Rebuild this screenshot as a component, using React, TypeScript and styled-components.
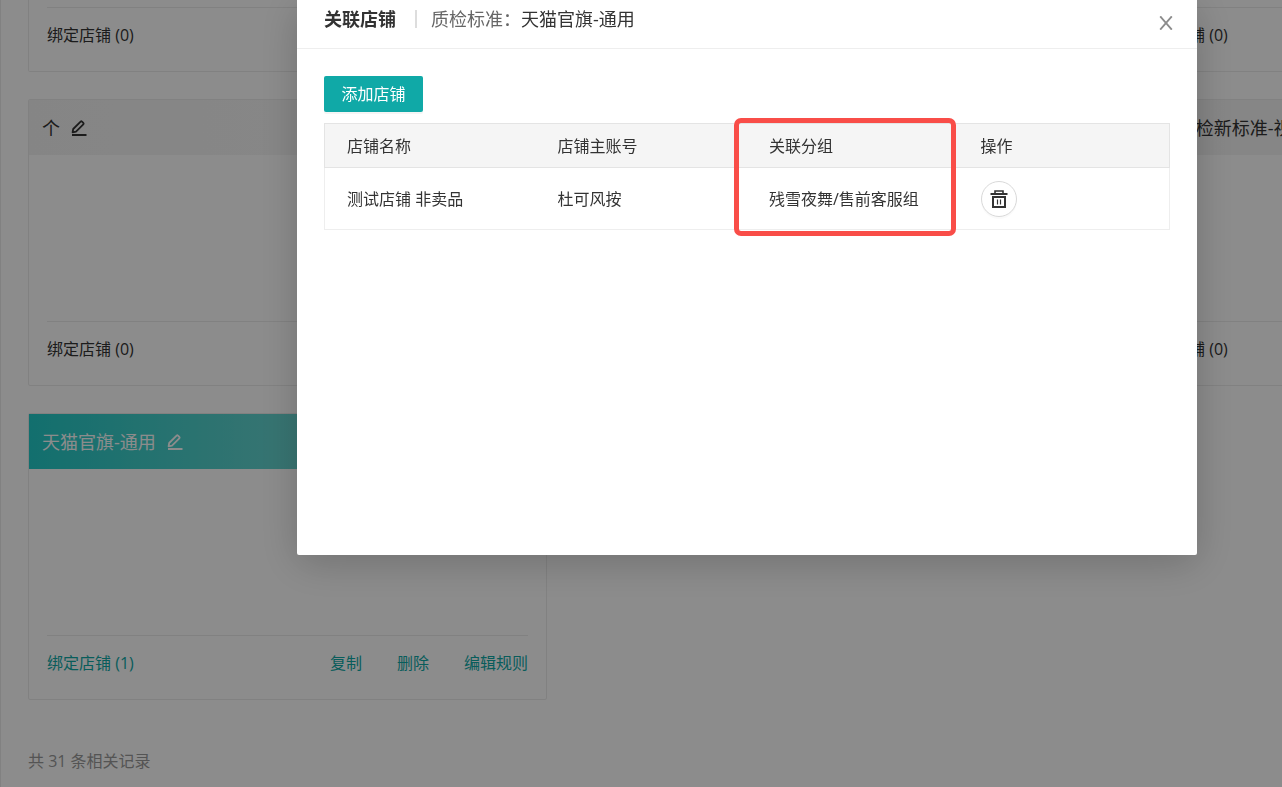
import React from 'react';
import styled, { createGlobalStyle } from 'styled-components';

const GlobalStyle = createGlobalStyle`
  *, *::before, *::after { box-sizing: border-box; }
  html, body { margin: 0; background: #fff; }
  body, button {
    font-family: 'Open Sans', 'Noto Sans CJK SC', sans-serif;
    font-size: 16px;
    line-height: 24px;
    color: #333;
  }
`;

const Page = styled.main`
  height: 100vh;
  overflow: hidden;
  padding-left: 27px;
  border-left: 1px solid #ececec;
`;

const CardGrid = styled.section`
  display: grid;
  grid-template-columns: repeat(3, minmax(519px, 40%));
  column-gap: 28px;
  row-gap: 27px;
`;

const CardBox = styled.article<{ $clipped?: boolean; $column: number }>`
  grid-column: ${(p) => p.$column};
  border: 1px solid #ececec;
  border-top-width: ${(p) => (p.$clipped ? '0' : '1px')};
  border-radius: ${(p) => (p.$clipped ? '0 0 2px 2px' : '2px')};
`;

const CardHead = styled.header<{ $active?: boolean }>`
  display: flex;
  align-items: center;
  gap: 11px;
  height: 55px;
  padding-left: 13px;
  font-size: 18px;
  white-space: nowrap;
  color: ${(p) => (p.$active ? '#fff' : '#333')};
  background: ${(p) =>
    p.$active
      ? 'linear-gradient(90deg, #22cbc8, #abded7)'
      : 'linear-gradient(90deg, #f3f3f3, #f9f9f9)'};
`;

const IconButton = styled.button`
  display: flex;
  padding: 0;
  border: 0;
  background: none;
  color: inherit;
  cursor: pointer;
`;

const CardBody = styled.div<{ $clipped?: boolean }>`
  height: ${(p) => (p.$clipped ? '7px' : '166px')};
`;

const CardFoot = styled.footer<{ $active?: boolean }>`
  display: flex;
  justify-content: space-between;
  margin: 0 18px;
  padding: 15px 0 24px;
  border-top: 1px solid #ececec;
  color: ${(p) => (p.$active ? '#0fa9a7' : '#333')};
`;

const Actions = styled.nav`
  display: flex;
  gap: 35px;
`;

const TextLink = styled.a`
  color: inherit;
  text-decoration: none;
`;

const Total = styled.p`
  margin: 49px 0 0;
  color: #999;
`;

const Mask = styled.div`
  position: fixed;
  inset: 0;
  padding: 0 85px 0 297px;
  background: rgba(0, 0, 0, 0.45);
`;

const Modal = styled.div`
  min-height: 555px;
  border-radius: 0 0 2px 2px;
  background: #fff;
  box-shadow: 0 8px 40px rgba(0, 0, 0, 0.2);
`;

const ModalHead = styled.header`
  display: flex;
  justify-content: space-between;
  height: 49px;
  padding: 0 24px 0 27px;
  border-bottom: 1px solid #eee;
`;

const Heading = styled.div`
  display: flex;
  align-items: center;
  height: 38px;
  font-size: 18px;
`;

const Title = styled.h2`
  margin: 0;
  font-size: 18px;
  font-weight: 700;
`;

const Divider = styled.span`
  width: 2px;
  height: 18px;
  margin: 0 14px 0 19px;
  background: #ddd;
`;

const Label = styled.span`
  color: #666;
`;

const CloseButton = styled(IconButton)`
  align-items: center;
  height: 46px;
  color: #8c8c8c;
`;

const ModalBody = styled.div`
  padding: 27px;
`;

const PrimaryButton = styled.button`
  display: block;
  min-width: 99px;
  height: 36px;
  margin-bottom: 11px;
  padding: 0 17px;
  border: 0;
  border-radius: 2px;
  background: #10a9a7;
  color: #fff;
  box-shadow: 0 2px 0 rgba(0, 0, 0, 0.04);
  cursor: pointer;
`;

const TableWrap = styled.div`
  position: relative;
`;

const Table = styled.table`
  width: 100%;
  table-layout: fixed;
  border-spacing: 0;
  text-align: left;
`;

const Th = styled.th`
  height: 45px;
  padding: 0 0 0 22px;
  border: solid #e4e4e4;
  border-width: 1px 0;
  background: #f5f5f5;
  font-weight: 400;
  &:first-child { border-left-width: 1px; }
  &:last-child { border-right-width: 1px; }
`;

const Td = styled.td`
  height: 62px;
  padding: 0 0 0 22px;
  border: solid #eee;
  border-width: 0 0 1px;
  &:first-child { border-left-width: 1px; }
  &:last-child { border-right-width: 1px; }
`;

const RoundButton = styled(IconButton)`
  align-items: center;
  justify-content: center;
  width: 36px;
  height: 36px;
  border: 1px solid #d9d9d9;
  border-radius: 50%;
  background: #fff;
  box-shadow: 0 2px 0 rgba(0, 0, 0, 0.02);
`;

const Highlight = styled.div`
  position: absolute;
  top: -5px;
  left: calc(50% - 13px);
  width: calc(25% + 10px);
  height: 118px;
  border: 5px solid #f94d48;
  border-radius: 7px;
  pointer-events: none;
`;

const EditIcon = () => (
  <svg width="16" height="16" viewBox="0 0 16 16" fill="none" stroke="currentColor" aria-hidden="true">
    <path d="M1.6 12.4 L2.2 9 L9.6 1.6 Q10.3 1 11 1.6 L12.3 2.9 Q13 3.6 12.3 4.3 L5 11.6 Z" strokeWidth="1.8" strokeLinejoin="round" />
    <path d="M1 15H15.5" strokeWidth="2" />
  </svg>
);

const TrashIcon = () => (
  <svg width="18" height="18" viewBox="0 0 18 18" fill="none" stroke="#333" aria-hidden="true">
    <path d="M0.5 4H17.5" strokeWidth="2" />
    <path d="M5 4V1H13V4" strokeWidth="1.6" />
    <path d="M3 7V17H15V7Z" strokeWidth="2" />
    <path d="M7.5 9.5V14.5M10.5 9.5V14.5" strokeWidth="1.2" />
  </svg>
);

const CloseIcon = () => (
  <svg width="14" height="14" viewBox="0 0 14 14" fill="none" stroke="currentColor" strokeWidth="1.8" aria-hidden="true">
    <path d="M1.2 0.3L12.8 13.7M12.8 0.3L1.2 13.7" />
  </svg>
);

interface CardProps {
  title?: string;
  shops: number;
  column: number;
  active?: boolean;
}

function Card({ title, shops, column, active }: CardProps) {
  const clipped = !title;
  return (
    <CardBox $clipped={clipped} $column={column}>
      {title && (
        <CardHead $active={active}>
          {title}
          <IconButton aria-label="编辑"><EditIcon /></IconButton>
        </CardHead>
      )}
      <CardBody $clipped={clipped} />
      <CardFoot $active={active}>
        <TextLink href="#shops">绑定店铺 ({shops})</TextLink>
        {active && (
          <Actions>
            <TextLink href="#copy">复制</TextLink>
            <TextLink href="#delete">删除</TextLink>
            <TextLink href="#rules">编辑规则</TextLink>
          </Actions>
        )}
      </CardFoot>
    </CardBox>
  );
}

export default function App() {
  return (
    <>
      <GlobalStyle />
      <Page>
        <CardGrid>
          <Card column={1} shops={0} />
          <Card column={3} shops={0} />
          <Card column={1} title="个" shops={0} />
          <Card column={3} title="天猫-质检新标准-视频" shops={0} />
          <Card column={1} title="天猫官旗-通用" shops={1} active />
        </CardGrid>
        <Total>共 31 条相关记录</Total>
      </Page>
      <Mask>
        <Modal role="dialog" aria-labelledby="modal-title">
          <ModalHead>
            <Heading>
              <Title id="modal-title">关联店铺</Title>
              <Divider />
              <Label>质检标准：</Label>
              <span>天猫官旗-通用</span>
            </Heading>
            <CloseButton aria-label="关闭"><CloseIcon /></CloseButton>
          </ModalHead>
          <ModalBody>
            <PrimaryButton>添加店铺</PrimaryButton>
            <TableWrap>
              <Table>
                <thead>
                  <tr>
                    <Th>店铺名称</Th>
                    <Th>店铺主账号</Th>
                    <Th>关联分组</Th>
                    <Th>操作</Th>
                  </tr>
                </thead>
                <tbody>
                  <tr>
                    <Td>测试店铺 非卖品</Td>
                    <Td>杜可风按</Td>
                    <Td>残雪夜舞/售前客服组</Td>
                    <Td><RoundButton aria-label="删除"><TrashIcon /></RoundButton></Td>
                  </tr>
                </tbody>
              </Table>
              <Highlight />
            </TableWrap>
          </ModalBody>
        </Modal>
      </Mask>
    </>
  );
}
